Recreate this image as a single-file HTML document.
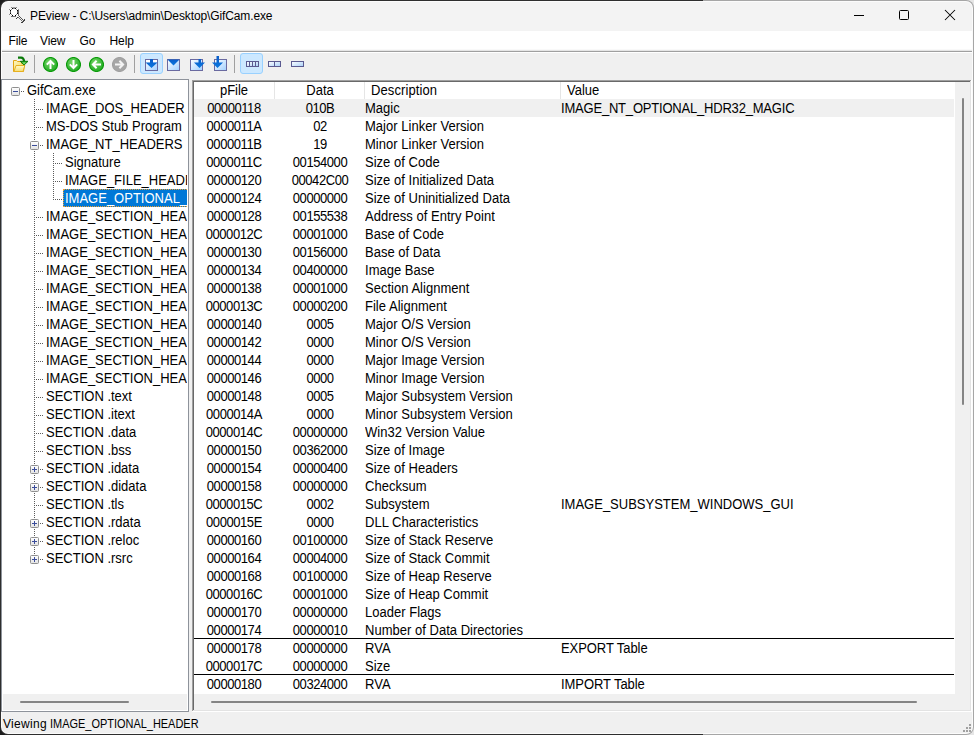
<!DOCTYPE html>
<html><head><meta charset="utf-8"><style>
html,body{margin:0;padding:0;}
body{width:974px;height:735px;overflow:hidden;position:relative;background:linear-gradient(90deg,#1c1c1c 703px,#e6e6e6 703px);font-family:"Liberation Sans", sans-serif;}
.r{position:absolute;}
.t{position:absolute;white-space:pre;font-family:"Liberation Sans", sans-serif;color:#000;}
.a{font-size:14px;line-height:18px;transform:scaleX(0.928571);transform-origin:0 0;}
</style></head><body>
<div class="r" style="left:0px;top:0px;width:974px;height:735px;background:linear-gradient(90deg,#2e2e2e 703px,#a6a6a6 703px);border-radius:8px;"></div><div class="r" style="left:1px;top:1px;width:972px;height:733px;background:#fbfbfb;border-radius:7px;"></div><div class="r" style="left:2px;top:31px;width:970px;height:702px;background:#f0f0f0;border-radius:0 0 6px 6px;"></div><div class="r" style="left:2px;top:2px;width:970px;height:29px;background:#f3f3f3;border-radius:6px 6px 0 0;"></div><div class="r" style="left:2px;top:31px;width:970px;height:18px;background:#ffffff;"></div><div class="r" style="left:2px;top:49px;width:970px;height:1px;background:#f9f9f9;"></div><div class="r" style="left:2px;top:50px;width:970px;height:1px;background:#e6e6e6;"></div><div class="r" style="left:2px;top:51px;width:970px;height:1px;background:#a0a0a0;"></div><div class="r" style="left:2px;top:52px;width:970px;height:1px;background:#ffffff;"></div><svg class="r" style="left:0;top:0" width="30" height="30" shape-rendering="crispEdges"><path d="M11 8 H17 V9 H18 V15 H17 V16 H11 V15 H10 V9 H11 Z" fill="#fff"/><rect x="11" y="7" width="1" height="1" fill="#8a8a8a"/><rect x="12" y="7" width="1" height="1" fill="#c0c0c0"/><rect x="13" y="7" width="1" height="1" fill="#9a9a9a"/><rect x="14" y="7" width="1" height="1" fill="#9a9a9a"/><rect x="15" y="7" width="1" height="1" fill="#c0c0c0"/><rect x="16" y="7" width="1" height="1" fill="#8a8a8a"/><rect x="12" y="8" width="1" height="1" fill="#000"/><rect x="15" y="8" width="1" height="1" fill="#000"/><rect x="10" y="10" width="1" height="1" fill="#000"/><rect x="17" y="10" width="1" height="1" fill="#000"/><rect x="10" y="13" width="1" height="1" fill="#000"/><rect x="17" y="13" width="1" height="1" fill="#000"/><rect x="12" y="15" width="1" height="1" fill="#000"/><rect x="15" y="15" width="1" height="1" fill="#000"/><rect x="13" y="8" width="1" height="1" fill="#8a8a8a"/><rect x="14" y="8" width="1" height="1" fill="#8a8a8a"/><rect x="9" y="9" width="1" height="1" fill="#8a8a8a"/><rect x="11" y="9" width="1" height="1" fill="#8a8a8a"/><rect x="16" y="9" width="1" height="1" fill="#8a8a8a"/><rect x="18" y="9" width="1" height="1" fill="#8a8a8a"/><rect x="9" y="14" width="1" height="1" fill="#8a8a8a"/><rect x="11" y="14" width="1" height="1" fill="#8a8a8a"/><rect x="16" y="14" width="1" height="1" fill="#8a8a8a"/><rect x="10" y="11" width="1" height="1" fill="#606060"/><rect x="17" y="11" width="1" height="1" fill="#606060"/><rect x="10" y="12" width="1" height="1" fill="#606060"/><rect x="17" y="12" width="1" height="1" fill="#606060"/><rect x="18" y="10" width="1" height="1" fill="#6a6a6a"/><rect x="18" y="11" width="1" height="1" fill="#6a6a6a"/><rect x="18" y="12" width="1" height="1" fill="#6a6a6a"/><rect x="18" y="13" width="1" height="1" fill="#6a6a6a"/><rect x="18" y="14" width="1" height="1" fill="#6a6a6a"/><rect x="18" y="15" width="1" height="1" fill="#6a6a6a"/><rect x="11" y="16" width="1" height="1" fill="#707070"/><rect x="12" y="16" width="1" height="1" fill="#707070"/><rect x="13" y="16" width="1" height="1" fill="#707070"/><rect x="14" y="16" width="1" height="1" fill="#707070"/><rect x="15" y="16" width="1" height="1" fill="#707070"/><rect x="19" y="16" width="1" height="1" fill="#505050"/><rect x="20" y="17" width="1" height="1" fill="#505050"/><rect x="21" y="18" width="1" height="1" fill="#505050"/><rect x="22" y="19" width="1" height="1" fill="#505050"/><rect x="23" y="20" width="1" height="1" fill="#505050"/><rect x="18" y="17" width="1" height="1" fill="#707070"/><rect x="19" y="18" width="1" height="1" fill="#707070"/><rect x="20" y="19" width="1" height="1" fill="#707070"/><rect x="21" y="20" width="1" height="1" fill="#707070"/><rect x="22" y="21" width="1" height="1" fill="#707070"/><rect x="16" y="18" width="1" height="1" fill="#404040"/><rect x="17" y="17" width="1" height="1" fill="#404040"/><rect x="24" y="19" width="1" height="1" fill="#404040"/><rect x="24" y="20" width="1" height="1" fill="#404040"/><rect x="23" y="21" width="1" height="1" fill="#404040"/><rect x="22" y="22" width="1" height="1" fill="#404040"/><rect x="21" y="22" width="1" height="1" fill="#404040"/></svg><div class="t" style="left:30px;top:7px;font-size:12px;line-height:18px;letter-spacing:-0.12px;color:#000;">PEview - C:\Users\admin\Desktop\GifCam.exe</div><svg class="r" style="left:850px;top:5px" width="110" height="22" viewBox="0 0 110 22">
<path d="M4 10.5 H14" stroke="#000" stroke-width="1"/>
<rect x="49.5" y="5.5" width="9" height="9" rx="1" fill="none" stroke="#000" stroke-width="1"/>
<path d="M95 5 L105 15 M105 5 L95 15" stroke="#000" stroke-width="1.05"/>
</svg><div class="t" style="left:8.5px;top:32px;font-size:12px;line-height:18px;letter-spacing:-0.1px;color:#000;">File</div><div class="t" style="left:40px;top:32px;font-size:12px;line-height:18px;letter-spacing:-0.1px;color:#000;">View</div><div class="t" style="left:79.5px;top:32px;font-size:12px;line-height:18px;letter-spacing:-0.1px;color:#000;">Go</div><div class="t" style="left:109.5px;top:32px;font-size:12px;line-height:18px;letter-spacing:-0.1px;color:#000;">Help</div><div class="r" style="left:34px;top:55px;width:1px;height:18px;background:#a0a0a0;"></div><div class="r" style="left:134px;top:55px;width:1px;height:18px;background:#a0a0a0;"></div><div class="r" style="left:234px;top:55px;width:1px;height:18px;background:#a0a0a0;"></div><div class="r" style="left:140px;top:53px;width:23px;height:21px;background:#cce8ff;box-sizing:border-box;border:1px solid #99d1ff;border-radius:3px;"></div><div class="r" style="left:240px;top:53px;width:23px;height:21px;background:#cce8ff;box-sizing:border-box;border:1px solid #99d1ff;border-radius:3px;"></div><svg class="r" style="left:12px;top:55px" width="18" height="18" viewBox="0 0 18 18">
<defs><linearGradient id="fg" x1="0" y1="0" x2="1" y2="1"><stop offset="0" stop-color="#fff8c0"/><stop offset="1" stop-color="#f4d050"/></linearGradient>
<linearGradient id="fg2" x1="0" y1="0" x2="0" y2="1"><stop offset="0" stop-color="#fffbd0"/><stop offset="1" stop-color="#f6dc70"/></linearGradient>
<radialGradient id="ag" cx="0.5" cy="0.5" r="0.5"><stop offset="0" stop-color="#90f080"/><stop offset="1" stop-color="#109010"/></radialGradient></defs>
<path d="M1.5 5.5 H4.5 L5.5 6.5 H9.5 V8.5 L12.5 9 L11.5 16.5 H1.5 Z" fill="url(#fg)" stroke="#e2a412" stroke-width="1"/>
<path d="M2 16.5 L4 10.5 H12.8 L11 16.5 Z" fill="url(#fg2)" stroke="#e6b020" stroke-width="1"/>
<path d="M6 2.6 H9.2 Q11.6 2.6 12.2 6.5" fill="none" stroke="#0a7a0a" stroke-width="2.2"/>
<path d="M8.2 6.3 H16 L12.1 10 Z" fill="url(#ag)" stroke="#0a7a0a" stroke-width="0.9" stroke-linejoin="round"/>
</svg><svg class="r" style="left:43.0px;top:57px" width="15" height="15" viewBox="0 0 15 15">
<defs><radialGradient id="gg" cx="0.4" cy="0.35" r="0.75"><stop offset="0" stop-color="#7ad86a"/><stop offset="0.6" stop-color="#3cb83a"/><stop offset="1" stop-color="#1aa81a"/></radialGradient></defs>
<circle cx="7.5" cy="7.5" r="7" fill="url(#gg)" stroke="#089a08" stroke-width="1.1"/>
<path d="M7.5 12 V4 M3.8 7.6 L7.5 3.9 L11.2 7.6" fill="none" stroke="#ffffff" stroke-width="2" stroke-linejoin="miter"/>
</svg><svg class="r" style="left:66.0px;top:57px" width="15" height="15" viewBox="0 0 15 15">
<defs><radialGradient id="gg" cx="0.4" cy="0.35" r="0.75"><stop offset="0" stop-color="#7ad86a"/><stop offset="0.6" stop-color="#3cb83a"/><stop offset="1" stop-color="#1aa81a"/></radialGradient></defs>
<circle cx="7.5" cy="7.5" r="7" fill="url(#gg)" stroke="#089a08" stroke-width="1.1"/>
<path d="M7.5 3 V11 M3.8 7.4 L7.5 11.1 L11.2 7.4" fill="none" stroke="#ffffff" stroke-width="2" stroke-linejoin="miter"/>
</svg><svg class="r" style="left:89.0px;top:57px" width="15" height="15" viewBox="0 0 15 15">
<defs><radialGradient id="gg" cx="0.4" cy="0.35" r="0.75"><stop offset="0" stop-color="#7ad86a"/><stop offset="0.6" stop-color="#3cb83a"/><stop offset="1" stop-color="#1aa81a"/></radialGradient></defs>
<circle cx="7.5" cy="7.5" r="7" fill="url(#gg)" stroke="#089a08" stroke-width="1.1"/>
<path d="M12 7.5 H4 M7.6 3.8 L3.9 7.5 L7.6 11.2" fill="none" stroke="#ffffff" stroke-width="2" stroke-linejoin="miter"/>
</svg><svg class="r" style="left:112.0px;top:57px" width="15" height="15" viewBox="0 0 15 15">
<defs><radialGradient id="gg" cx="0.4" cy="0.35" r="0.75"><stop offset="0" stop-color="#7ad86a"/><stop offset="0.6" stop-color="#3cb83a"/><stop offset="1" stop-color="#1aa81a"/></radialGradient></defs>
<circle cx="7.5" cy="7.5" r="7" fill="#a6a6a6" stroke="#a0a0a0" stroke-width="1.1"/>
<path d="M3 7.5 H11 M7.4 3.8 L11.1 7.5 L7.4 11.2" fill="none" stroke="#f4f4f4" stroke-width="2" stroke-linejoin="miter"/>
</svg><svg class="r" style="left:145px;top:56px" width="18" height="18" viewBox="0 0 18 18"><defs><linearGradient id="eg" x1="0" y1="0" x2="1" y2="1"><stop offset="0" stop-color="#ffffff"/><stop offset="1" stop-color="#9fcfff"/></linearGradient>
<linearGradient id="bg2" x1="0" y1="0" x2="0" y2="1"><stop offset="0" stop-color="#0a5cc8"/><stop offset="1" stop-color="#0a78e0"/></linearGradient></defs>
<rect x="0.5" y="3.5" width="12" height="11" fill="url(#eg)" stroke="#6a6aa0" stroke-width="1"/>
<rect x="1" y="4" width="11" height="2" fill="#fff"/><path d="M5 3 H8 V6.5 H12.5 L6.5 12 L0.5 6.5 H5 Z" fill="url(#bg2)"/>
</svg><svg class="r" style="left:167px;top:56px" width="18" height="18" viewBox="0 0 18 18"><defs><linearGradient id="eg" x1="0" y1="0" x2="1" y2="1"><stop offset="0" stop-color="#ffffff"/><stop offset="1" stop-color="#9fcfff"/></linearGradient>
<linearGradient id="bg2" x1="0" y1="0" x2="0" y2="1"><stop offset="0" stop-color="#0a5cc8"/><stop offset="1" stop-color="#0a78e0"/></linearGradient></defs>
<rect x="0.5" y="3.5" width="12" height="11" fill="url(#eg)" stroke="#6a6aa0" stroke-width="1"/>
<path d="M0.5 3.5 H12.5 L6.5 9.5 Z" fill="url(#bg2)"/>
</svg><svg class="r" style="left:190px;top:56px" width="18" height="18" viewBox="0 0 18 18"><defs><linearGradient id="eg" x1="0" y1="0" x2="1" y2="1"><stop offset="0" stop-color="#ffffff"/><stop offset="1" stop-color="#9fcfff"/></linearGradient>
<linearGradient id="bg2" x1="0" y1="0" x2="0" y2="1"><stop offset="0" stop-color="#0a5cc8"/><stop offset="1" stop-color="#0a78e0"/></linearGradient></defs>
<rect x="0.5" y="3.5" width="12" height="11" fill="url(#eg)" stroke="#6a6aa0" stroke-width="1"/>
<path d="M8.5 3 H11 V6.5 H15 L9.5 12 L4 6.5 H8.5 Z" fill="url(#bg2)"/>
</svg><svg class="r" style="left:212px;top:55px" width="18" height="18" viewBox="0 0 18 18"><defs><linearGradient id="eg" x1="0" y1="0" x2="1" y2="1"><stop offset="0" stop-color="#ffffff"/><stop offset="1" stop-color="#9fcfff"/></linearGradient>
<linearGradient id="bg2" x1="0" y1="0" x2="0" y2="1"><stop offset="0" stop-color="#0a5cc8"/><stop offset="1" stop-color="#0a78e0"/></linearGradient></defs>
<rect x="2.5" y="4.5" width="12" height="11" fill="url(#eg)" stroke="#6a6aa0" stroke-width="1"/>
<path d="M4.5 1 H7 V7.5 H11 L5.5 13 L0 7.5 H4.5 Z" fill="url(#bg2)"/>
</svg><svg class="r" style="left:246px;top:61px" width="13" height="6" viewBox="0 0 13 6">
<defs><linearGradient id="cg" x1="0" y1="0" x2="1" y2="1"><stop offset="0" stop-color="#ffffff"/><stop offset="1" stop-color="#a8d0f8"/></linearGradient></defs>
<rect x="0.5" y="0.5" width="12" height="5" fill="url(#cg)" stroke="#5a5a90" stroke-width="1"/><path d="M3.5 0.5 V5.5" stroke="#5a5a90" stroke-width="1"/><path d="M6.5 0.5 V5.5" stroke="#5a5a90" stroke-width="1"/><path d="M9.5 0.5 V5.5" stroke="#5a5a90" stroke-width="1"/>
</svg><svg class="r" style="left:268px;top:61px" width="13" height="6" viewBox="0 0 13 6">
<defs><linearGradient id="cg" x1="0" y1="0" x2="1" y2="1"><stop offset="0" stop-color="#ffffff"/><stop offset="1" stop-color="#a8d0f8"/></linearGradient></defs>
<rect x="0.5" y="0.5" width="12" height="5" fill="url(#cg)" stroke="#5a5a90" stroke-width="1"/><path d="M6.5 0.5 V5.5" stroke="#5a5a90" stroke-width="1"/>
</svg><svg class="r" style="left:291px;top:61px" width="13" height="6" viewBox="0 0 13 6">
<defs><linearGradient id="cg" x1="0" y1="0" x2="1" y2="1"><stop offset="0" stop-color="#ffffff"/><stop offset="1" stop-color="#a8d0f8"/></linearGradient></defs>
<rect x="0.5" y="0.5" width="12" height="5" fill="url(#cg)" stroke="#5a5a90" stroke-width="1"/>
</svg><div class="r" style="left:1px;top:79px;width:188px;height:633px;background:#8e939b;"></div><div class="r" style="left:2px;top:80px;width:186px;height:631px;background:#ffffff;"></div><div class="r" style="left:3px;top:694px;width:184px;height:16px;background:#f0f0f0;"></div><div class="r" style="left:20px;top:701px;width:109px;height:2px;background:#858585;border-radius:1px;"></div><div class="r" style="left:3px;top:80px;width:184px;height:614px;overflow:hidden">
<svg class="r" style="left:-3px;top:-80px" width="190" height="700" viewBox="0 0 190 700">
<defs><linearGradient id="bx" x1="0" y1="0" x2="0" y2="1"><stop offset="0" stop-color="#fff"/><stop offset="1" stop-color="#e2e2e2"/></linearGradient></defs>
<g fill="#5a5a5a"><rect x="34" y="99" width="1" height="1"/><rect x="34" y="101" width="1" height="1"/><rect x="34" y="103" width="1" height="1"/><rect x="34" y="105" width="1" height="1"/><rect x="34" y="107" width="1" height="1"/><rect x="34" y="109" width="1" height="1"/><rect x="34" y="111" width="1" height="1"/><rect x="34" y="113" width="1" height="1"/><rect x="34" y="115" width="1" height="1"/><rect x="34" y="117" width="1" height="1"/><rect x="34" y="119" width="1" height="1"/><rect x="34" y="121" width="1" height="1"/><rect x="34" y="123" width="1" height="1"/><rect x="34" y="125" width="1" height="1"/><rect x="34" y="127" width="1" height="1"/><rect x="34" y="129" width="1" height="1"/><rect x="34" y="131" width="1" height="1"/><rect x="34" y="133" width="1" height="1"/><rect x="34" y="135" width="1" height="1"/><rect x="34" y="137" width="1" height="1"/><rect x="34" y="139" width="1" height="1"/><rect x="34" y="141" width="1" height="1"/><rect x="34" y="143" width="1" height="1"/><rect x="34" y="145" width="1" height="1"/><rect x="34" y="147" width="1" height="1"/><rect x="34" y="149" width="1" height="1"/><rect x="34" y="151" width="1" height="1"/><rect x="34" y="153" width="1" height="1"/><rect x="34" y="155" width="1" height="1"/><rect x="34" y="157" width="1" height="1"/><rect x="34" y="159" width="1" height="1"/><rect x="34" y="161" width="1" height="1"/><rect x="34" y="163" width="1" height="1"/><rect x="34" y="165" width="1" height="1"/><rect x="34" y="167" width="1" height="1"/><rect x="34" y="169" width="1" height="1"/><rect x="34" y="171" width="1" height="1"/><rect x="34" y="173" width="1" height="1"/><rect x="34" y="175" width="1" height="1"/><rect x="34" y="177" width="1" height="1"/><rect x="34" y="179" width="1" height="1"/><rect x="34" y="181" width="1" height="1"/><rect x="34" y="183" width="1" height="1"/><rect x="34" y="185" width="1" height="1"/><rect x="34" y="187" width="1" height="1"/><rect x="34" y="189" width="1" height="1"/><rect x="34" y="191" width="1" height="1"/><rect x="34" y="193" width="1" height="1"/><rect x="34" y="195" width="1" height="1"/><rect x="34" y="197" width="1" height="1"/><rect x="34" y="199" width="1" height="1"/><rect x="34" y="201" width="1" height="1"/><rect x="34" y="203" width="1" height="1"/><rect x="34" y="205" width="1" height="1"/><rect x="34" y="207" width="1" height="1"/><rect x="34" y="209" width="1" height="1"/><rect x="34" y="211" width="1" height="1"/><rect x="34" y="213" width="1" height="1"/><rect x="34" y="215" width="1" height="1"/><rect x="34" y="217" width="1" height="1"/><rect x="34" y="219" width="1" height="1"/><rect x="34" y="221" width="1" height="1"/><rect x="34" y="223" width="1" height="1"/><rect x="34" y="225" width="1" height="1"/><rect x="34" y="227" width="1" height="1"/><rect x="34" y="229" width="1" height="1"/><rect x="34" y="231" width="1" height="1"/><rect x="34" y="233" width="1" height="1"/><rect x="34" y="235" width="1" height="1"/><rect x="34" y="237" width="1" height="1"/><rect x="34" y="239" width="1" height="1"/><rect x="34" y="241" width="1" height="1"/><rect x="34" y="243" width="1" height="1"/><rect x="34" y="245" width="1" height="1"/><rect x="34" y="247" width="1" height="1"/><rect x="34" y="249" width="1" height="1"/><rect x="34" y="251" width="1" height="1"/><rect x="34" y="253" width="1" height="1"/><rect x="34" y="255" width="1" height="1"/><rect x="34" y="257" width="1" height="1"/><rect x="34" y="259" width="1" height="1"/><rect x="34" y="261" width="1" height="1"/><rect x="34" y="263" width="1" height="1"/><rect x="34" y="265" width="1" height="1"/><rect x="34" y="267" width="1" height="1"/><rect x="34" y="269" width="1" height="1"/><rect x="34" y="271" width="1" height="1"/><rect x="34" y="273" width="1" height="1"/><rect x="34" y="275" width="1" height="1"/><rect x="34" y="277" width="1" height="1"/><rect x="34" y="279" width="1" height="1"/><rect x="34" y="281" width="1" height="1"/><rect x="34" y="283" width="1" height="1"/><rect x="34" y="285" width="1" height="1"/><rect x="34" y="287" width="1" height="1"/><rect x="34" y="289" width="1" height="1"/><rect x="34" y="291" width="1" height="1"/><rect x="34" y="293" width="1" height="1"/><rect x="34" y="295" width="1" height="1"/><rect x="34" y="297" width="1" height="1"/><rect x="34" y="299" width="1" height="1"/><rect x="34" y="301" width="1" height="1"/><rect x="34" y="303" width="1" height="1"/><rect x="34" y="305" width="1" height="1"/><rect x="34" y="307" width="1" height="1"/><rect x="34" y="309" width="1" height="1"/><rect x="34" y="311" width="1" height="1"/><rect x="34" y="313" width="1" height="1"/><rect x="34" y="315" width="1" height="1"/><rect x="34" y="317" width="1" height="1"/><rect x="34" y="319" width="1" height="1"/><rect x="34" y="321" width="1" height="1"/><rect x="34" y="323" width="1" height="1"/><rect x="34" y="325" width="1" height="1"/><rect x="34" y="327" width="1" height="1"/><rect x="34" y="329" width="1" height="1"/><rect x="34" y="331" width="1" height="1"/><rect x="34" y="333" width="1" height="1"/><rect x="34" y="335" width="1" height="1"/><rect x="34" y="337" width="1" height="1"/><rect x="34" y="339" width="1" height="1"/><rect x="34" y="341" width="1" height="1"/><rect x="34" y="343" width="1" height="1"/><rect x="34" y="345" width="1" height="1"/><rect x="34" y="347" width="1" height="1"/><rect x="34" y="349" width="1" height="1"/><rect x="34" y="351" width="1" height="1"/><rect x="34" y="353" width="1" height="1"/><rect x="34" y="355" width="1" height="1"/><rect x="34" y="357" width="1" height="1"/><rect x="34" y="359" width="1" height="1"/><rect x="34" y="361" width="1" height="1"/><rect x="34" y="363" width="1" height="1"/><rect x="34" y="365" width="1" height="1"/><rect x="34" y="367" width="1" height="1"/><rect x="34" y="369" width="1" height="1"/><rect x="34" y="371" width="1" height="1"/><rect x="34" y="373" width="1" height="1"/><rect x="34" y="375" width="1" height="1"/><rect x="34" y="377" width="1" height="1"/><rect x="34" y="379" width="1" height="1"/><rect x="34" y="381" width="1" height="1"/><rect x="34" y="383" width="1" height="1"/><rect x="34" y="385" width="1" height="1"/><rect x="34" y="387" width="1" height="1"/><rect x="34" y="389" width="1" height="1"/><rect x="34" y="391" width="1" height="1"/><rect x="34" y="393" width="1" height="1"/><rect x="34" y="395" width="1" height="1"/><rect x="34" y="397" width="1" height="1"/><rect x="34" y="399" width="1" height="1"/><rect x="34" y="401" width="1" height="1"/><rect x="34" y="403" width="1" height="1"/><rect x="34" y="405" width="1" height="1"/><rect x="34" y="407" width="1" height="1"/><rect x="34" y="409" width="1" height="1"/><rect x="34" y="411" width="1" height="1"/><rect x="34" y="413" width="1" height="1"/><rect x="34" y="415" width="1" height="1"/><rect x="34" y="417" width="1" height="1"/><rect x="34" y="419" width="1" height="1"/><rect x="34" y="421" width="1" height="1"/><rect x="34" y="423" width="1" height="1"/><rect x="34" y="425" width="1" height="1"/><rect x="34" y="427" width="1" height="1"/><rect x="34" y="429" width="1" height="1"/><rect x="34" y="431" width="1" height="1"/><rect x="34" y="433" width="1" height="1"/><rect x="34" y="435" width="1" height="1"/><rect x="34" y="437" width="1" height="1"/><rect x="34" y="439" width="1" height="1"/><rect x="34" y="441" width="1" height="1"/><rect x="34" y="443" width="1" height="1"/><rect x="34" y="445" width="1" height="1"/><rect x="34" y="447" width="1" height="1"/><rect x="34" y="449" width="1" height="1"/><rect x="34" y="451" width="1" height="1"/><rect x="34" y="453" width="1" height="1"/><rect x="34" y="455" width="1" height="1"/><rect x="34" y="457" width="1" height="1"/><rect x="34" y="459" width="1" height="1"/><rect x="34" y="461" width="1" height="1"/><rect x="34" y="463" width="1" height="1"/><rect x="34" y="465" width="1" height="1"/><rect x="34" y="467" width="1" height="1"/><rect x="34" y="469" width="1" height="1"/><rect x="34" y="471" width="1" height="1"/><rect x="34" y="473" width="1" height="1"/><rect x="34" y="475" width="1" height="1"/><rect x="34" y="477" width="1" height="1"/><rect x="34" y="479" width="1" height="1"/><rect x="34" y="481" width="1" height="1"/><rect x="34" y="483" width="1" height="1"/><rect x="34" y="485" width="1" height="1"/><rect x="34" y="487" width="1" height="1"/><rect x="34" y="489" width="1" height="1"/><rect x="34" y="491" width="1" height="1"/><rect x="34" y="493" width="1" height="1"/><rect x="34" y="495" width="1" height="1"/><rect x="34" y="497" width="1" height="1"/><rect x="34" y="499" width="1" height="1"/><rect x="34" y="501" width="1" height="1"/><rect x="34" y="503" width="1" height="1"/><rect x="34" y="505" width="1" height="1"/><rect x="34" y="507" width="1" height="1"/><rect x="34" y="509" width="1" height="1"/><rect x="34" y="511" width="1" height="1"/><rect x="34" y="513" width="1" height="1"/><rect x="34" y="515" width="1" height="1"/><rect x="34" y="517" width="1" height="1"/><rect x="34" y="519" width="1" height="1"/><rect x="34" y="521" width="1" height="1"/><rect x="34" y="523" width="1" height="1"/><rect x="34" y="525" width="1" height="1"/><rect x="34" y="527" width="1" height="1"/><rect x="34" y="529" width="1" height="1"/><rect x="34" y="531" width="1" height="1"/><rect x="34" y="533" width="1" height="1"/><rect x="34" y="535" width="1" height="1"/><rect x="34" y="537" width="1" height="1"/><rect x="34" y="539" width="1" height="1"/><rect x="34" y="541" width="1" height="1"/><rect x="34" y="543" width="1" height="1"/><rect x="34" y="545" width="1" height="1"/><rect x="34" y="547" width="1" height="1"/><rect x="34" y="549" width="1" height="1"/><rect x="34" y="551" width="1" height="1"/><rect x="34" y="553" width="1" height="1"/><rect x="34" y="555" width="1" height="1"/><rect x="34" y="557" width="1" height="1"/><rect x="34" y="559" width="1" height="1"/><rect x="53" y="153" width="1" height="1"/><rect x="53" y="155" width="1" height="1"/><rect x="53" y="157" width="1" height="1"/><rect x="53" y="159" width="1" height="1"/><rect x="53" y="161" width="1" height="1"/><rect x="53" y="163" width="1" height="1"/><rect x="53" y="165" width="1" height="1"/><rect x="53" y="167" width="1" height="1"/><rect x="53" y="169" width="1" height="1"/><rect x="53" y="171" width="1" height="1"/><rect x="53" y="173" width="1" height="1"/><rect x="53" y="175" width="1" height="1"/><rect x="53" y="177" width="1" height="1"/><rect x="53" y="179" width="1" height="1"/><rect x="53" y="181" width="1" height="1"/><rect x="53" y="183" width="1" height="1"/><rect x="53" y="185" width="1" height="1"/><rect x="53" y="187" width="1" height="1"/><rect x="53" y="189" width="1" height="1"/><rect x="53" y="191" width="1" height="1"/><rect x="53" y="193" width="1" height="1"/><rect x="53" y="195" width="1" height="1"/><rect x="53" y="197" width="1" height="1"/><rect x="53" y="199" width="1" height="1"/><rect x="21" y="91" width="1" height="1"/><rect x="23" y="91" width="1" height="1"/><rect x="36" y="109" width="1" height="1"/><rect x="38" y="109" width="1" height="1"/><rect x="40" y="109" width="1" height="1"/><rect x="42" y="109" width="1" height="1"/><rect x="36" y="127" width="1" height="1"/><rect x="38" y="127" width="1" height="1"/><rect x="40" y="127" width="1" height="1"/><rect x="42" y="127" width="1" height="1"/><rect x="36" y="145" width="1" height="1"/><rect x="38" y="145" width="1" height="1"/><rect x="40" y="145" width="1" height="1"/><rect x="42" y="145" width="1" height="1"/><rect x="55" y="163" width="1" height="1"/><rect x="57" y="163" width="1" height="1"/><rect x="59" y="163" width="1" height="1"/><rect x="61" y="163" width="1" height="1"/><rect x="55" y="181" width="1" height="1"/><rect x="57" y="181" width="1" height="1"/><rect x="59" y="181" width="1" height="1"/><rect x="61" y="181" width="1" height="1"/><rect x="55" y="199" width="1" height="1"/><rect x="57" y="199" width="1" height="1"/><rect x="59" y="199" width="1" height="1"/><rect x="61" y="199" width="1" height="1"/><rect x="36" y="217" width="1" height="1"/><rect x="38" y="217" width="1" height="1"/><rect x="40" y="217" width="1" height="1"/><rect x="42" y="217" width="1" height="1"/><rect x="36" y="235" width="1" height="1"/><rect x="38" y="235" width="1" height="1"/><rect x="40" y="235" width="1" height="1"/><rect x="42" y="235" width="1" height="1"/><rect x="36" y="253" width="1" height="1"/><rect x="38" y="253" width="1" height="1"/><rect x="40" y="253" width="1" height="1"/><rect x="42" y="253" width="1" height="1"/><rect x="36" y="271" width="1" height="1"/><rect x="38" y="271" width="1" height="1"/><rect x="40" y="271" width="1" height="1"/><rect x="42" y="271" width="1" height="1"/><rect x="36" y="289" width="1" height="1"/><rect x="38" y="289" width="1" height="1"/><rect x="40" y="289" width="1" height="1"/><rect x="42" y="289" width="1" height="1"/><rect x="36" y="307" width="1" height="1"/><rect x="38" y="307" width="1" height="1"/><rect x="40" y="307" width="1" height="1"/><rect x="42" y="307" width="1" height="1"/><rect x="36" y="325" width="1" height="1"/><rect x="38" y="325" width="1" height="1"/><rect x="40" y="325" width="1" height="1"/><rect x="42" y="325" width="1" height="1"/><rect x="36" y="343" width="1" height="1"/><rect x="38" y="343" width="1" height="1"/><rect x="40" y="343" width="1" height="1"/><rect x="42" y="343" width="1" height="1"/><rect x="36" y="361" width="1" height="1"/><rect x="38" y="361" width="1" height="1"/><rect x="40" y="361" width="1" height="1"/><rect x="42" y="361" width="1" height="1"/><rect x="36" y="379" width="1" height="1"/><rect x="38" y="379" width="1" height="1"/><rect x="40" y="379" width="1" height="1"/><rect x="42" y="379" width="1" height="1"/><rect x="36" y="397" width="1" height="1"/><rect x="38" y="397" width="1" height="1"/><rect x="40" y="397" width="1" height="1"/><rect x="42" y="397" width="1" height="1"/><rect x="36" y="415" width="1" height="1"/><rect x="38" y="415" width="1" height="1"/><rect x="40" y="415" width="1" height="1"/><rect x="42" y="415" width="1" height="1"/><rect x="36" y="433" width="1" height="1"/><rect x="38" y="433" width="1" height="1"/><rect x="40" y="433" width="1" height="1"/><rect x="42" y="433" width="1" height="1"/><rect x="36" y="451" width="1" height="1"/><rect x="38" y="451" width="1" height="1"/><rect x="40" y="451" width="1" height="1"/><rect x="42" y="451" width="1" height="1"/><rect x="36" y="469" width="1" height="1"/><rect x="38" y="469" width="1" height="1"/><rect x="40" y="469" width="1" height="1"/><rect x="42" y="469" width="1" height="1"/><rect x="36" y="487" width="1" height="1"/><rect x="38" y="487" width="1" height="1"/><rect x="40" y="487" width="1" height="1"/><rect x="42" y="487" width="1" height="1"/><rect x="36" y="505" width="1" height="1"/><rect x="38" y="505" width="1" height="1"/><rect x="40" y="505" width="1" height="1"/><rect x="42" y="505" width="1" height="1"/><rect x="36" y="523" width="1" height="1"/><rect x="38" y="523" width="1" height="1"/><rect x="40" y="523" width="1" height="1"/><rect x="42" y="523" width="1" height="1"/><rect x="36" y="541" width="1" height="1"/><rect x="38" y="541" width="1" height="1"/><rect x="40" y="541" width="1" height="1"/><rect x="42" y="541" width="1" height="1"/><rect x="36" y="559" width="1" height="1"/><rect x="38" y="559" width="1" height="1"/><rect x="40" y="559" width="1" height="1"/><rect x="42" y="559" width="1" height="1"/></g><rect x="11.5" y="87.5" width="8" height="8" rx="1" fill="url(#bx)" stroke="#8f8f8f"/><rect x="13" y="91" width="5" height="1" fill="#3a4c9a"/><rect x="30.5" y="141.5" width="8" height="8" rx="1" fill="url(#bx)" stroke="#8f8f8f"/><rect x="32" y="145" width="5" height="1" fill="#3a4c9a"/><rect x="30.5" y="465.5" width="8" height="8" rx="1" fill="url(#bx)" stroke="#8f8f8f"/><rect x="32" y="469" width="5" height="1" fill="#3a4c9a"/><rect x="34" y="467" width="1" height="5" fill="#3a4c9a"/><rect x="30.5" y="483.5" width="8" height="8" rx="1" fill="url(#bx)" stroke="#8f8f8f"/><rect x="32" y="487" width="5" height="1" fill="#3a4c9a"/><rect x="34" y="485" width="1" height="5" fill="#3a4c9a"/><rect x="30.5" y="519.5" width="8" height="8" rx="1" fill="url(#bx)" stroke="#8f8f8f"/><rect x="32" y="523" width="5" height="1" fill="#3a4c9a"/><rect x="34" y="521" width="1" height="5" fill="#3a4c9a"/><rect x="30.5" y="537.5" width="8" height="8" rx="1" fill="url(#bx)" stroke="#8f8f8f"/><rect x="32" y="541" width="5" height="1" fill="#3a4c9a"/><rect x="34" y="539" width="1" height="5" fill="#3a4c9a"/><rect x="30.5" y="555.5" width="8" height="8" rx="1" fill="url(#bx)" stroke="#8f8f8f"/><rect x="32" y="559" width="5" height="1" fill="#3a4c9a"/><rect x="34" y="557" width="1" height="5" fill="#3a4c9a"/>
</svg><div class="t a" style="left:24px;top:1px;letter-spacing:0.000px;color:#000;">GifCam.exe</div><div class="t a" style="left:42.5px;top:19px;letter-spacing:0.000px;color:#000;">IMAGE_DOS_HEADER</div><div class="t a" style="left:42.5px;top:37px;letter-spacing:0.000px;color:#000;">MS-DOS Stub Program</div><div class="t a" style="left:42.5px;top:55px;letter-spacing:0.000px;color:#000;">IMAGE_NT_HEADERS</div><div class="t a" style="left:61.7px;top:73px;letter-spacing:0.000px;color:#000;">Signature</div><div class="t a" style="left:61.7px;top:91px;letter-spacing:0.000px;color:#000;">IMAGE_FILE_HEADER</div><div class="r" style="left:60px;top:109px;width:200px;height:18px;background:#0078d7;outline:1px dotted #f0a030;outline-offset:-1px"></div><div class="t a" style="left:61.7px;top:109px;letter-spacing:0.000px;color:#fff;">IMAGE_OPTIONAL_HEADER</div><div class="t a" style="left:42.5px;top:127px;letter-spacing:0.000px;color:#000;">IMAGE_SECTION_HEADER .text</div><div class="t a" style="left:42.5px;top:145px;letter-spacing:0.000px;color:#000;">IMAGE_SECTION_HEADER .text</div><div class="t a" style="left:42.5px;top:163px;letter-spacing:0.000px;color:#000;">IMAGE_SECTION_HEADER .text</div><div class="t a" style="left:42.5px;top:181px;letter-spacing:0.000px;color:#000;">IMAGE_SECTION_HEADER .text</div><div class="t a" style="left:42.5px;top:199px;letter-spacing:0.000px;color:#000;">IMAGE_SECTION_HEADER .text</div><div class="t a" style="left:42.5px;top:217px;letter-spacing:0.000px;color:#000;">IMAGE_SECTION_HEADER .text</div><div class="t a" style="left:42.5px;top:235px;letter-spacing:0.000px;color:#000;">IMAGE_SECTION_HEADER .text</div><div class="t a" style="left:42.5px;top:253px;letter-spacing:0.000px;color:#000;">IMAGE_SECTION_HEADER .text</div><div class="t a" style="left:42.5px;top:271px;letter-spacing:0.000px;color:#000;">IMAGE_SECTION_HEADER .text</div><div class="t a" style="left:42.5px;top:289px;letter-spacing:0.000px;color:#000;">IMAGE_SECTION_HEADER .text</div><div class="t a" style="left:42.5px;top:307px;letter-spacing:0.000px;color:#000;">SECTION .text</div><div class="t a" style="left:42.5px;top:325px;letter-spacing:0.000px;color:#000;">SECTION .itext</div><div class="t a" style="left:42.5px;top:343px;letter-spacing:0.000px;color:#000;">SECTION .data</div><div class="t a" style="left:42.5px;top:361px;letter-spacing:0.000px;color:#000;">SECTION .bss</div><div class="t a" style="left:42.5px;top:379px;letter-spacing:0.000px;color:#000;">SECTION .idata</div><div class="t a" style="left:42.5px;top:397px;letter-spacing:0.000px;color:#000;">SECTION .didata</div><div class="t a" style="left:42.5px;top:415px;letter-spacing:0.000px;color:#000;">SECTION .tls</div><div class="t a" style="left:42.5px;top:433px;letter-spacing:0.000px;color:#000;">SECTION .rdata</div><div class="t a" style="left:42.5px;top:451px;letter-spacing:0.000px;color:#000;">SECTION .reloc</div><div class="t a" style="left:42.5px;top:469px;letter-spacing:0.000px;color:#000;">SECTION .rsrc</div></div><div class="r" style="left:192px;top:80px;width:780px;height:632px;background:#ffffff;"></div><div class="r" style="left:192px;top:80px;width:780px;height:1px;background:#a0a0a0;"></div><div class="r" style="left:192px;top:80px;width:1px;height:631px;background:#a0a0a0;"></div><div class="r" style="left:193px;top:81px;width:778px;height:1px;background:#696969;"></div><div class="r" style="left:193px;top:81px;width:1px;height:629px;background:#696969;"></div><div class="r" style="left:193px;top:710px;width:778px;height:1px;background:#e3e3e3;"></div><div class="r" style="left:970px;top:81px;width:1px;height:630px;background:#e3e3e3;"></div><div class="r" style="left:192px;top:711px;width:780px;height:1px;background:#ffffff;"></div><div class="r" style="left:971px;top:80px;width:1px;height:632px;background:#ffffff;"></div><div class="r" style="left:955px;top:82px;width:15px;height:628px;background:#f0f0f0;"></div><div class="r" style="left:962px;top:98px;width:2px;height:307px;background:#858585;border-radius:1px;"></div><div class="r" style="left:194px;top:694px;width:761px;height:16px;background:#f0f0f0;"></div><div class="r" style="left:211px;top:701px;width:706px;height:2px;background:#858585;border-radius:1px;"></div><div class="r" style="left:274px;top:82px;width:1px;height:17px;background:#e5e5e5;"></div><div class="r" style="left:364px;top:82px;width:1px;height:17px;background:#e5e5e5;"></div><div class="r" style="left:560px;top:82px;width:1px;height:17px;background:#e5e5e5;"></div><div class="t a" style="left:174.0px;width:120px;text-align:center;transform-origin:50% 0;top:81px;letter-spacing:0.000px">pFile</div><div class="t a" style="left:259.5px;width:120px;text-align:center;transform-origin:50% 0;top:81px;letter-spacing:0.000px">Data</div><div class="t a" style="left:371px;top:81px;letter-spacing:0.108px;color:#000;">Description</div><div class="t a" style="left:566.5px;top:81px;letter-spacing:0.000px;color:#000;">Value</div><div class="r" style="left:194px;top:99px;width:761px;height:595px;overflow:hidden"><div class="r" style="left:0px;top:0px;width:760px;height:18px;background:#f0f0f0;"></div><div class="r" style="left:0px;top:539px;width:760px;height:1px;background:#000;"></div><div class="r" style="left:0px;top:575px;width:760px;height:1px;background:#000;"></div><div class="t a" style="left:-20.0px;width:120px;text-align:center;transform-origin:50% 0;top:0px;letter-spacing:-0.463px">00000118</div><div class="t a" style="left:65.5px;width:120px;text-align:center;transform-origin:50% 0;top:0px;letter-spacing:-0.463px">010B</div><div class="t a" style="left:170.60000000000002px;top:0px;letter-spacing:0.022px;color:#000;">Magic</div><div class="t a" style="left:366.6px;top:0px;letter-spacing:-0.215px;color:#000;">IMAGE_NT_OPTIONAL_HDR32_MAGIC</div><div class="t a" style="left:-20.0px;width:120px;text-align:center;transform-origin:50% 0;top:18px;letter-spacing:-0.463px">0000011A</div><div class="t a" style="left:65.5px;width:120px;text-align:center;transform-origin:50% 0;top:18px;letter-spacing:-0.463px">02</div><div class="t a" style="left:170.60000000000002px;top:18px;letter-spacing:0.022px;color:#000;">Major Linker Version</div><div class="t a" style="left:-20.0px;width:120px;text-align:center;transform-origin:50% 0;top:36px;letter-spacing:-0.463px">0000011B</div><div class="t a" style="left:65.5px;width:120px;text-align:center;transform-origin:50% 0;top:36px;letter-spacing:-0.463px">19</div><div class="t a" style="left:170.60000000000002px;top:36px;letter-spacing:0.022px;color:#000;">Minor Linker Version</div><div class="t a" style="left:-20.0px;width:120px;text-align:center;transform-origin:50% 0;top:54px;letter-spacing:-0.463px">0000011C</div><div class="t a" style="left:65.5px;width:120px;text-align:center;transform-origin:50% 0;top:54px;letter-spacing:-0.463px">00154000</div><div class="t a" style="left:170.60000000000002px;top:54px;letter-spacing:0.022px;color:#000;">Size of Code</div><div class="t a" style="left:-20.0px;width:120px;text-align:center;transform-origin:50% 0;top:72px;letter-spacing:-0.463px">00000120</div><div class="t a" style="left:65.5px;width:120px;text-align:center;transform-origin:50% 0;top:72px;letter-spacing:-0.463px">00042C00</div><div class="t a" style="left:170.60000000000002px;top:72px;letter-spacing:0.022px;color:#000;">Size of Initialized Data</div><div class="t a" style="left:-20.0px;width:120px;text-align:center;transform-origin:50% 0;top:90px;letter-spacing:-0.463px">00000124</div><div class="t a" style="left:65.5px;width:120px;text-align:center;transform-origin:50% 0;top:90px;letter-spacing:-0.463px">00000000</div><div class="t a" style="left:170.60000000000002px;top:90px;letter-spacing:0.022px;color:#000;">Size of Uninitialized Data</div><div class="t a" style="left:-20.0px;width:120px;text-align:center;transform-origin:50% 0;top:108px;letter-spacing:-0.463px">00000128</div><div class="t a" style="left:65.5px;width:120px;text-align:center;transform-origin:50% 0;top:108px;letter-spacing:-0.463px">00155538</div><div class="t a" style="left:170.60000000000002px;top:108px;letter-spacing:0.022px;color:#000;">Address of Entry Point</div><div class="t a" style="left:-20.0px;width:120px;text-align:center;transform-origin:50% 0;top:126px;letter-spacing:-0.463px">0000012C</div><div class="t a" style="left:65.5px;width:120px;text-align:center;transform-origin:50% 0;top:126px;letter-spacing:-0.463px">00001000</div><div class="t a" style="left:170.60000000000002px;top:126px;letter-spacing:0.022px;color:#000;">Base of Code</div><div class="t a" style="left:-20.0px;width:120px;text-align:center;transform-origin:50% 0;top:144px;letter-spacing:-0.463px">00000130</div><div class="t a" style="left:65.5px;width:120px;text-align:center;transform-origin:50% 0;top:144px;letter-spacing:-0.463px">00156000</div><div class="t a" style="left:170.60000000000002px;top:144px;letter-spacing:0.022px;color:#000;">Base of Data</div><div class="t a" style="left:-20.0px;width:120px;text-align:center;transform-origin:50% 0;top:162px;letter-spacing:-0.463px">00000134</div><div class="t a" style="left:65.5px;width:120px;text-align:center;transform-origin:50% 0;top:162px;letter-spacing:-0.463px">00400000</div><div class="t a" style="left:170.60000000000002px;top:162px;letter-spacing:0.022px;color:#000;">Image Base</div><div class="t a" style="left:-20.0px;width:120px;text-align:center;transform-origin:50% 0;top:180px;letter-spacing:-0.463px">00000138</div><div class="t a" style="left:65.5px;width:120px;text-align:center;transform-origin:50% 0;top:180px;letter-spacing:-0.463px">00001000</div><div class="t a" style="left:170.60000000000002px;top:180px;letter-spacing:0.022px;color:#000;">Section Alignment</div><div class="t a" style="left:-20.0px;width:120px;text-align:center;transform-origin:50% 0;top:198px;letter-spacing:-0.463px">0000013C</div><div class="t a" style="left:65.5px;width:120px;text-align:center;transform-origin:50% 0;top:198px;letter-spacing:-0.463px">00000200</div><div class="t a" style="left:170.60000000000002px;top:198px;letter-spacing:0.022px;color:#000;">File Alignment</div><div class="t a" style="left:-20.0px;width:120px;text-align:center;transform-origin:50% 0;top:216px;letter-spacing:-0.463px">00000140</div><div class="t a" style="left:65.5px;width:120px;text-align:center;transform-origin:50% 0;top:216px;letter-spacing:-0.463px">0005</div><div class="t a" style="left:170.60000000000002px;top:216px;letter-spacing:0.022px;color:#000;">Major O/S Version</div><div class="t a" style="left:-20.0px;width:120px;text-align:center;transform-origin:50% 0;top:234px;letter-spacing:-0.463px">00000142</div><div class="t a" style="left:65.5px;width:120px;text-align:center;transform-origin:50% 0;top:234px;letter-spacing:-0.463px">0000</div><div class="t a" style="left:170.60000000000002px;top:234px;letter-spacing:0.022px;color:#000;">Minor O/S Version</div><div class="t a" style="left:-20.0px;width:120px;text-align:center;transform-origin:50% 0;top:252px;letter-spacing:-0.463px">00000144</div><div class="t a" style="left:65.5px;width:120px;text-align:center;transform-origin:50% 0;top:252px;letter-spacing:-0.463px">0000</div><div class="t a" style="left:170.60000000000002px;top:252px;letter-spacing:0.022px;color:#000;">Major Image Version</div><div class="t a" style="left:-20.0px;width:120px;text-align:center;transform-origin:50% 0;top:270px;letter-spacing:-0.463px">00000146</div><div class="t a" style="left:65.5px;width:120px;text-align:center;transform-origin:50% 0;top:270px;letter-spacing:-0.463px">0000</div><div class="t a" style="left:170.60000000000002px;top:270px;letter-spacing:0.022px;color:#000;">Minor Image Version</div><div class="t a" style="left:-20.0px;width:120px;text-align:center;transform-origin:50% 0;top:288px;letter-spacing:-0.463px">00000148</div><div class="t a" style="left:65.5px;width:120px;text-align:center;transform-origin:50% 0;top:288px;letter-spacing:-0.463px">0005</div><div class="t a" style="left:170.60000000000002px;top:288px;letter-spacing:0.022px;color:#000;">Major Subsystem Version</div><div class="t a" style="left:-20.0px;width:120px;text-align:center;transform-origin:50% 0;top:306px;letter-spacing:-0.463px">0000014A</div><div class="t a" style="left:65.5px;width:120px;text-align:center;transform-origin:50% 0;top:306px;letter-spacing:-0.463px">0000</div><div class="t a" style="left:170.60000000000002px;top:306px;letter-spacing:0.022px;color:#000;">Minor Subsystem Version</div><div class="t a" style="left:-20.0px;width:120px;text-align:center;transform-origin:50% 0;top:324px;letter-spacing:-0.463px">0000014C</div><div class="t a" style="left:65.5px;width:120px;text-align:center;transform-origin:50% 0;top:324px;letter-spacing:-0.463px">00000000</div><div class="t a" style="left:170.60000000000002px;top:324px;letter-spacing:0.022px;color:#000;">Win32 Version Value</div><div class="t a" style="left:-20.0px;width:120px;text-align:center;transform-origin:50% 0;top:342px;letter-spacing:-0.463px">00000150</div><div class="t a" style="left:65.5px;width:120px;text-align:center;transform-origin:50% 0;top:342px;letter-spacing:-0.463px">00362000</div><div class="t a" style="left:170.60000000000002px;top:342px;letter-spacing:0.022px;color:#000;">Size of Image</div><div class="t a" style="left:-20.0px;width:120px;text-align:center;transform-origin:50% 0;top:360px;letter-spacing:-0.463px">00000154</div><div class="t a" style="left:65.5px;width:120px;text-align:center;transform-origin:50% 0;top:360px;letter-spacing:-0.463px">00000400</div><div class="t a" style="left:170.60000000000002px;top:360px;letter-spacing:0.022px;color:#000;">Size of Headers</div><div class="t a" style="left:-20.0px;width:120px;text-align:center;transform-origin:50% 0;top:378px;letter-spacing:-0.463px">00000158</div><div class="t a" style="left:65.5px;width:120px;text-align:center;transform-origin:50% 0;top:378px;letter-spacing:-0.463px">00000000</div><div class="t a" style="left:170.60000000000002px;top:378px;letter-spacing:0.022px;color:#000;">Checksum</div><div class="t a" style="left:-20.0px;width:120px;text-align:center;transform-origin:50% 0;top:396px;letter-spacing:-0.463px">0000015C</div><div class="t a" style="left:65.5px;width:120px;text-align:center;transform-origin:50% 0;top:396px;letter-spacing:-0.463px">0002</div><div class="t a" style="left:170.60000000000002px;top:396px;letter-spacing:0.022px;color:#000;">Subsystem</div><div class="t a" style="left:366.6px;top:396px;letter-spacing:0.000px;color:#000;">IMAGE_SUBSYSTEM_WINDOWS_GUI</div><div class="t a" style="left:-20.0px;width:120px;text-align:center;transform-origin:50% 0;top:414px;letter-spacing:-0.463px">0000015E</div><div class="t a" style="left:65.5px;width:120px;text-align:center;transform-origin:50% 0;top:414px;letter-spacing:-0.463px">0000</div><div class="t a" style="left:170.60000000000002px;top:414px;letter-spacing:0.022px;color:#000;">DLL Characteristics</div><div class="t a" style="left:-20.0px;width:120px;text-align:center;transform-origin:50% 0;top:432px;letter-spacing:-0.463px">00000160</div><div class="t a" style="left:65.5px;width:120px;text-align:center;transform-origin:50% 0;top:432px;letter-spacing:-0.463px">00100000</div><div class="t a" style="left:170.60000000000002px;top:432px;letter-spacing:0.022px;color:#000;">Size of Stack Reserve</div><div class="t a" style="left:-20.0px;width:120px;text-align:center;transform-origin:50% 0;top:450px;letter-spacing:-0.463px">00000164</div><div class="t a" style="left:65.5px;width:120px;text-align:center;transform-origin:50% 0;top:450px;letter-spacing:-0.463px">00004000</div><div class="t a" style="left:170.60000000000002px;top:450px;letter-spacing:0.022px;color:#000;">Size of Stack Commit</div><div class="t a" style="left:-20.0px;width:120px;text-align:center;transform-origin:50% 0;top:468px;letter-spacing:-0.463px">00000168</div><div class="t a" style="left:65.5px;width:120px;text-align:center;transform-origin:50% 0;top:468px;letter-spacing:-0.463px">00100000</div><div class="t a" style="left:170.60000000000002px;top:468px;letter-spacing:0.022px;color:#000;">Size of Heap Reserve</div><div class="t a" style="left:-20.0px;width:120px;text-align:center;transform-origin:50% 0;top:486px;letter-spacing:-0.463px">0000016C</div><div class="t a" style="left:65.5px;width:120px;text-align:center;transform-origin:50% 0;top:486px;letter-spacing:-0.463px">00001000</div><div class="t a" style="left:170.60000000000002px;top:486px;letter-spacing:0.022px;color:#000;">Size of Heap Commit</div><div class="t a" style="left:-20.0px;width:120px;text-align:center;transform-origin:50% 0;top:504px;letter-spacing:-0.463px">00000170</div><div class="t a" style="left:65.5px;width:120px;text-align:center;transform-origin:50% 0;top:504px;letter-spacing:-0.463px">00000000</div><div class="t a" style="left:170.60000000000002px;top:504px;letter-spacing:0.022px;color:#000;">Loader Flags</div><div class="t a" style="left:-20.0px;width:120px;text-align:center;transform-origin:50% 0;top:522px;letter-spacing:-0.463px">00000174</div><div class="t a" style="left:65.5px;width:120px;text-align:center;transform-origin:50% 0;top:522px;letter-spacing:-0.463px">00000010</div><div class="t a" style="left:170.60000000000002px;top:522px;letter-spacing:0.022px;color:#000;">Number of Data Directories</div><div class="t a" style="left:-20.0px;width:120px;text-align:center;transform-origin:50% 0;top:540px;letter-spacing:-0.463px">00000178</div><div class="t a" style="left:65.5px;width:120px;text-align:center;transform-origin:50% 0;top:540px;letter-spacing:-0.463px">00000000</div><div class="t a" style="left:170.60000000000002px;top:540px;letter-spacing:0.022px;color:#000;">RVA</div><div class="t a" style="left:366.6px;top:540px;letter-spacing:-0.075px;color:#000;">EXPORT Table</div><div class="t a" style="left:-20.0px;width:120px;text-align:center;transform-origin:50% 0;top:558px;letter-spacing:-0.463px">0000017C</div><div class="t a" style="left:65.5px;width:120px;text-align:center;transform-origin:50% 0;top:558px;letter-spacing:-0.463px">00000000</div><div class="t a" style="left:170.60000000000002px;top:558px;letter-spacing:0.022px;color:#000;">Size</div><div class="t a" style="left:-20.0px;width:120px;text-align:center;transform-origin:50% 0;top:576px;letter-spacing:-0.463px">00000180</div><div class="t a" style="left:65.5px;width:120px;text-align:center;transform-origin:50% 0;top:576px;letter-spacing:-0.463px">00324000</div><div class="t a" style="left:170.60000000000002px;top:576px;letter-spacing:0.022px;color:#000;">RVA</div><div class="t a" style="left:366.6px;top:576px;letter-spacing:-0.075px;color:#000;">IMPORT Table</div></div><div class="t" style="left:3px;top:716px;font-size:12px;line-height:16px;letter-spacing:0.3px;color:#000;">Viewing</div><div class="t" style="left:50px;top:716px;font-size:12px;line-height:16px;letter-spacing:0px;color:#000;transform:scaleX(0.913);transform-origin:0 0;">IMAGE_OPTIONAL_HEADER</div><div class="r" style="left:969px;top:724px;width:2px;height:2px;background:#a0a0a0;"></div><div class="r" style="left:966px;top:727px;width:2px;height:2px;background:#a0a0a0;"></div><div class="r" style="left:969px;top:727px;width:2px;height:2px;background:#a0a0a0;"></div><div class="r" style="left:963px;top:730px;width:2px;height:2px;background:#a0a0a0;"></div><div class="r" style="left:966px;top:730px;width:2px;height:2px;background:#a0a0a0;"></div><div class="r" style="left:969px;top:730px;width:2px;height:2px;background:#a0a0a0;"></div>
</body></html>
